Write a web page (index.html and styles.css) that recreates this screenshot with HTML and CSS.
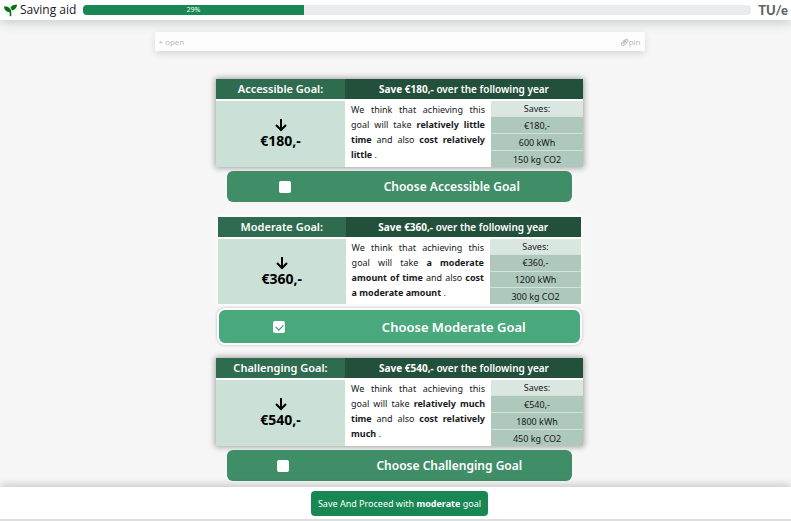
FILE: index.html
```html
<!DOCTYPE html>
<html lang="en">
<head>
<meta charset="utf-8">
<meta name="viewport" content="width=device-width, initial-scale=1">
<title>Saving aid</title>
<link rel="stylesheet" href="styles.css">
</head>
<body>
<header class="topbar">
  <svg class="leaf" viewBox="0 0 512 512" aria-hidden="true"><path d="M64 96H0c0 123.700 100.300 224 224 224v144c0 8.800 7.200 16 16 16h32c8.800 0 16-7.200 16-16V320C288 196.300 187.700 96 64 96zm384-64c-84.200 0-157.400 46.500-195.700 115.200 27.700 30.200 48.200 66.900 59 107.600C424 243.100 512 147.900 512 32h-64z"/></svg>
  <h1 class="brand">Saving aid</h1>
  <div class="progress" role="progressbar" aria-label="Progress" aria-valuenow="29" aria-valuemin="0" aria-valuemax="100">
    <div class="progress-fill" style="width: 33%">29%</div>
  </div>
  <span class="logo">TU/e</span>
</header>

<main class="content">
  <div class="drawer">
    <button class="drawer-button" type="button">+ open</button>
    <button class="drawer-button" type="button"><svg class="clip" viewBox="0 0 16 16" aria-hidden="true"><path d="M4 9.500 9.500 3.500a2.600 2.600 0 0 1 4 3.500L7 14a3.300 3.300 0 0 1-5-4.500L8 3M5 11.500l5.500-6"/></svg>pin</button>
  </div>

  <form class="goals" id="goals">
    <section class="goal">
      <div class="card">
        <h2 class="card-name">Accessible Goal:</h2>
        <h3 class="card-title"><b>Save €180,-</b> over the following year</h3>
        <div class="amount">
          <svg class="arrow" viewBox="0 0 12 14" aria-hidden="true"><path d="M6 1v11M1 7l5 5 5-5"/></svg>
          <span>€180,-</span>
        </div>
        <p class="description">We think that achieving this goal will take <b>relatively little time</b> and also <b>cost relatively little</b> .</p>
        <table class="saves">
          <thead><tr><th>Saves:</th></tr></thead>
          <tbody><tr><td>€180,-</td></tr><tr><td>600 kWh</td></tr><tr><td>150 kg CO2</td></tr></tbody>
        </table>
      </div>
      <label class="choose"><input class="tick" type="checkbox" name="goal" value="accessible"><span>Choose Accessible Goal</span></label>
    </section>

    <section class="goal goal-selected">
      <div class="card">
        <h2 class="card-name">Moderate Goal:</h2>
        <h3 class="card-title"><b>Save €360,-</b> over the following year</h3>
        <div class="amount">
          <svg class="arrow" viewBox="0 0 12 14" aria-hidden="true"><path d="M6 1v11M1 7l5 5 5-5"/></svg>
          <span>€360,-</span>
        </div>
        <p class="description">We think that achieving this goal will take <b>a moderate amount of time</b> and also <b>cost a moderate amount</b> .</p>
        <table class="saves">
          <thead><tr><th>Saves:</th></tr></thead>
          <tbody><tr><td>€360,-</td></tr><tr><td>1200 kWh</td></tr><tr><td>300 kg CO2</td></tr></tbody>
        </table>
      </div>
      <label class="choose"><input class="tick" type="checkbox" name="goal" value="moderate" checked><span>Choose Moderate Goal</span></label>
    </section>

    <section class="goal">
      <div class="card">
        <h2 class="card-name">Challenging Goal:</h2>
        <h3 class="card-title"><b>Save €540,-</b> over the following year</h3>
        <div class="amount">
          <svg class="arrow" viewBox="0 0 12 14" aria-hidden="true"><path d="M6 1v11M1 7l5 5 5-5"/></svg>
          <span>€540,-</span>
        </div>
        <p class="description">We think that achieving this goal will take <b>relatively much time</b> and also <b>cost relatively much</b> .</p>
        <table class="saves">
          <thead><tr><th>Saves:</th></tr></thead>
          <tbody><tr><td>€540,-</td></tr><tr><td>1800 kWh</td></tr><tr><td>450 kg CO2</td></tr></tbody>
        </table>
      </div>
      <label class="choose"><input class="tick" type="checkbox" name="goal" value="challenging"><span>Choose Challenging Goal</span></label>
    </section>
  </form>
</main>

<footer class="footer">
  <button class="proceed" type="submit" form="goals">Save And Proceed with <b>moderate</b> goal</button>
</footer>
</body>
</html>
```
FILE: styles.css
```css
* {
  box-sizing: border-box;
}

body {
  margin: 0;
  min-height: 100vh;
  display: flex;
  flex-direction: column;
  background: #f6f6f6;
  color: #16191c;
  font-family: "Noto Sans", "Open Sans", sans-serif;
  font-size: 9px;
}

h1, h2, h3, p {
  margin: 0;
}

b {
  font-weight: 700;
}

button {
  font: inherit;
  cursor: pointer;
}

.topbar {
  display: flex;
  align-items: center;
  height: 20px;
  padding: 0 3px 0 4px;
  background: #fff;
  box-shadow: 0 2px 12px rgba(30, 60, 50, 0.25);
}

.leaf {
  width: 13px;
  height: 13px;
  margin-right: 3px;
  fill: #08700f;
}

.brand {
  margin-right: 7px;
  font-family: "Open Sans", sans-serif;
  font-size: 12px;
  font-weight: 400;
  line-height: 20px;
}

.progress {
  flex: 1;
  height: 10px;
  margin-right: 7px;
  overflow: hidden;
  border-radius: 4px;
  background: #e9ecef;
}

.progress-fill {
  height: 100%;
  background: #198754;
  color: #fff;
  font-size: 7px;
  line-height: 10px;
  text-align: center;
}

.logo {
  color: #626462;
  font-family: Lato, sans-serif;
  font-size: 13px;
  font-weight: 900;
  line-height: 20px;
}

.content {
  flex: 1;
  padding: 12px 0 6px 8px;
}

.drawer {
  display: flex;
  justify-content: space-between;
  align-items: center;
  max-width: 490px;
  height: 19px;
  margin: 0 auto 28px;
  padding: 0 4px;
  background: #fdfdfd;
  box-shadow: 0 3px 7px rgba(0, 0, 0, 0.12);
}

.drawer-button {
  display: flex;
  align-items: center;
  padding: 0;
  border: 0;
  background: none;
  color: #b8b8b8;
  font-family: "Open Sans", sans-serif;
  font-size: 8px;
}

.clip {
  width: 8px;
  height: 8px;
  fill: none;
  stroke: #aaa;
  stroke-width: 2;
}

.goals {
  display: flex;
  flex-direction: column;
  gap: 15px;
  max-width: 367px;
  margin: 0 auto;
}

.goal {
  display: flex;
  flex-direction: column;
  gap: 4px;
}

.card {
  display: grid;
  grid-template-columns: 129fr 146fr 92fr;
  grid-template-rows: 20px 66px;
  row-gap: 2px;
  background: #fff;
  box-shadow: 0 0 6px 1px rgba(0, 0, 0, 0.35);
}

.card-name,
.card-title {
  color: #fff;
  font-weight: 600;
  line-height: 20px;
  text-align: center;
}

.card-name {
  background: #2f6b4f;
  font-size: 11px;
}

.card-title {
  grid-column: span 2;
  background: #23503b;
  font-size: 10px;
}

.amount {
  display: flex;
  flex-direction: column;
  align-items: center;
  justify-content: center;
  background: #cbe0d6;
  color: #000;
  font-size: 14px;
  font-weight: 700;
  line-height: 18px;
}

.arrow {
  width: 12px;
  height: 14px;
  fill: none;
  stroke: #000;
  stroke-width: 2;
}

.description {
  padding: 1px 6px;
  font-size: 9px;
  line-height: 15px;
  text-align: justify;
}

.saves {
  width: 100%;
  height: 100%;
  border-collapse: collapse;
  background: #aec8bb;
  font-size: 9px;
  line-height: 15px;
  text-align: center;
}

.saves th {
  padding: 0;
  background: #dae6e0;
  font-weight: 400;
}

.saves td {
  padding: 0;
  border-top: 1px solid #d3e2da;
}

.choose {
  display: flex;
  align-items: center;
  justify-content: space-around;
  height: 31px;
  margin: 0 11px;
  padding: 0 6px;
  border-radius: 6px;
  background: #3f8e67;
  color: #fff;
  font-size: 12px;
  font-weight: 600;
  cursor: pointer;
}

.tick {
  appearance: none;
  width: 12px;
  height: 12px;
  margin: 0;
  border-radius: 2px;
  background: #fff;
}

.tick:checked::before {
  content: "";
  display: block;
  width: 6px;
  height: 4px;
  margin: 3px;
  border: solid #2f9468;
  border-width: 0 0 1px 1px;
  transform: rotate(-45deg);
}

.goal-selected {
  margin-bottom: -2px;
}

.goal-selected .card {
  grid-template-rows: 20px 65px;
  margin: 0 2px;
  box-shadow: 0 0 4px 1px #fff;
}

.goal-selected .choose {
  height: 37px;
  margin: 0 1px;
  border: 2px solid #fff;
  border-radius: 8px;
  background: #4aa87d;
  box-shadow: 0 0 3px rgba(0, 0, 0, 0.25);
  font-size: 13px;
}

.footer {
  display: flex;
  justify-content: center;
  padding: 4px 0 3px 8px;
  border-bottom: 2px solid #dcdedf;
  background: #fff;
  box-shadow: 0 -2px 8px rgba(0, 0, 0, 0.2);
}

.proceed {
  height: 25px;
  padding: 0 7px;
  border: 0;
  border-radius: 4px;
  background: #198754;
  color: #fff;
}
```
